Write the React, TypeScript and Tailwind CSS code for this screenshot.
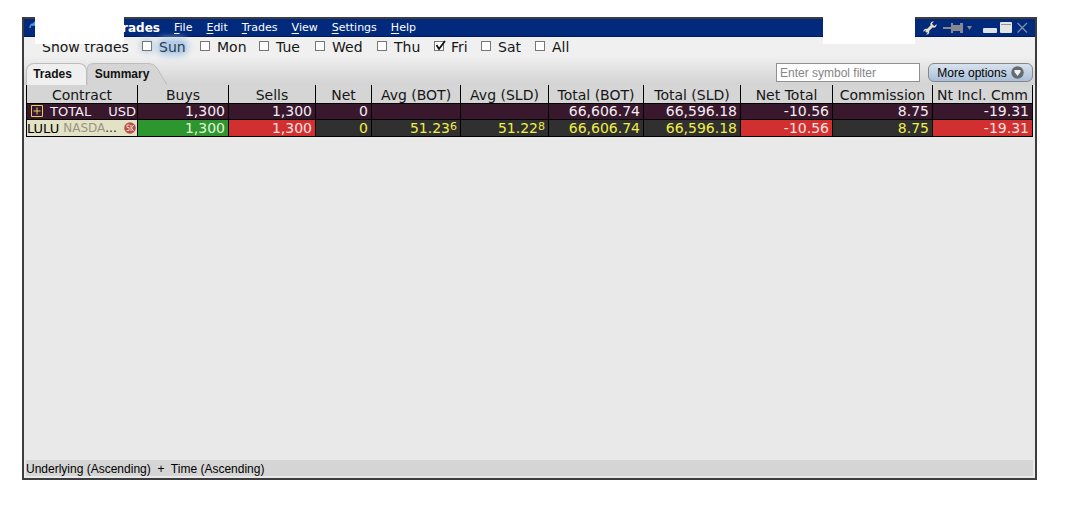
import React from "react";
import clsx from "clsx";

const menus = ["File", "Edit", "Trades", "View", "Settings", "Help"];

const days = [
    { name: "Sun", width: "w-[58px]" },
    { name: "Mon", width: "w-[59px]" },
    { name: "Tue", width: "w-14" },
    { name: "Wed", width: "w-[62px]" },
    { name: "Thu", width: "w-[57px]" },
    { name: "Fri", width: "w-[47px]" },
    { name: "Sat", width: "w-[54px]" },
    { name: "All", width: "w-10" },
];

const columns = [
    { title: "Contract", width: "w-[111px]" },
    { title: "Buys", width: "w-[91px]" },
    { title: "Sells", width: "w-[87px]" },
    { title: "Net", width: "w-[56px]" },
    { title: "Avg (BOT)", width: "w-[89px]" },
    { title: "Avg (SLD)", width: "w-[88px]" },
    { title: "Total (BOT)", width: "w-[95px]" },
    { title: "Total (SLD)", width: "w-[97px]" },
    { title: "Net Total", width: "w-[92px]" },
    { title: "Commission", width: "w-[100px]" },
    { title: "Nt Incl. Cmm", width: "w-[100px]" },
];

const totals = ["1,300", "1,300", "0", "", "", "66,606.74", "66,596.18", "-10.56", "8.75", "-19.31"];

const GREEN = "bg-[#2e962e] text-[#e4f5dc]";
const RED = "bg-[#d23030] text-[#fbe3e0]";
const DARK = "bg-[#303030] text-[#f0ee45]";

const position = [
    { value: "1,300", tone: GREEN },
    { value: "1,300", tone: RED },
    { value: "0", tone: DARK },
    { value: "51.23", small: "6", tone: DARK },
    { value: "51.22", small: "8", tone: DARK },
    { value: "66,606.74", tone: DARK },
    { value: "66,596.18", tone: DARK },
    { value: "-10.56", tone: RED },
    { value: "8.75", tone: DARK },
    { value: "-19.31", tone: RED },
];

function TitleBar() {
    return (
        <header className="flex h-[18px] items-center border-b border-[#001a55] bg-[#022a7c] pr-[7px] text-white">
            <svg width="12" height="16" viewBox="0 0 12 16" fill="none" className="ml-1 shrink-0">
                <path d="M2 8C2 4 5 3 8 5M8 5L6 2M8 5H4" stroke="#5b9be0" strokeWidth="1.5" />
            </svg>
            <h1 className="w-[120px] text-right text-[12px] font-bold">Trades</h1>
            <nav className="ml-[14px] flex gap-[14px] pt-px text-[11px]">
                {menus.map((menu) => (
                    <button key={menu} type="button">
                        <span className="underline underline-offset-2">{menu[0]}</span>
                        {menu.slice(1)}
                    </button>
                ))}
            </nav>

            {/* window controls */}
            <div className="ml-auto flex items-center">
                <button type="button" aria-label="Configure">
                    <svg width="14" height="14" viewBox="0 0 14 14">
                        <path d="M3 11L10 4" stroke="#e6e0c4" strokeWidth="2.8" />
                        <path d="M13.5 3L11.5 5L9.5 4.5L9 2.5L11 .5C8.500 0 6.800 2 7.500 4.200L9.800 6.500C12 7.200 14 5.500 13.500 3Z" fill="#e6e0c4" />
                        <path d="M.5 11L2.500 9L4.500 9.500L5 11.500L3 13.500C5.500 14 6.800 12 6.200 10L4 7.800C2 7.200 0 8.500 .5 11Z" fill="#e6e0c4" />
                    </svg>
                </button>
                <button type="button" aria-label="Pin" className="ml-[5px]">
                    <svg width="32" height="12" viewBox="0 0 32 12" fill="#87898f">
                        <path d="M1 5H9V7H1Z" />
                        <path d="M9 1H11V3H18V1H21V11H18V9H11V11H9Z" />
                        <path d="M25 4H30L27.500 8Z" />
                    </svg>
                </button>
                <button type="button" aria-label="Minimize" className="ml-[9px]">
                    <svg width="14" height="12" viewBox="0 0 14 12">
                        <rect y="6" width="14" height="5" rx="1" fill="#dfe2e8" />
                    </svg>
                </button>
                <button type="button" aria-label="Maximize" className="ml-[3px]">
                    <svg width="12" height="12" viewBox="0 0 12 12">
                        <rect width="12" height="11" rx="1" fill="#e4e4e2" />
                        <rect x="1" y="2" width="10" height="1" fill="#8992a8" />
                    </svg>
                </button>
                <button type="button" aria-label="Close" className="ml-1">
                    <svg width="12" height="12" viewBox="0 0 12 12" stroke="#8390a8" strokeWidth="1.2">
                        <path d="M1.500 1L11 10.500M11 1L1.500 10.500" />
                    </svg>
                </button>
            </div>
        </header>
    );
}

function DayFilter() {
    return (
        <fieldset className="flex h-5 items-center pl-4 text-[14px] text-[#161616]">
            <span className="w-[100px] shrink-0">Show trades</span>
            {days.map(({ name, width }) => (
                <label key={name} className={clsx("flex shrink-0 items-center gap-[7px]", width)}>
                    <input
                        type="checkbox"
                        defaultChecked={name === "Fri"}
                        className={clsx(
                            "peer mb-[2px] size-[10px] shrink-0 appearance-none border border-[#777] bg-white",
                            name === "Sun" && "shadow-[0_0_6px_1px_#b4cce6]"
                        )}
                    />
                    <svg
                        width="12"
                        height="12"
                        viewBox="0 0 12 12"
                        fill="none"
                        className="pointer-events-none invisible mb-[2px] -ml-[17px] shrink-0 peer-checked:visible"
                    >
                        <path d="M2.500 5L5 9L11 1" stroke="#111" strokeWidth="1.800" />
                    </svg>
                    <span
                        className={clsx(
                            "-ml-[2px] leading-3",
                            name === "Sun" && "rounded-md bg-[#b4cce6] text-[#2a3d55] shadow-[0_0_6px_3px_#b4cce6]"
                        )}
                    >
                        {name}
                    </span>
                </label>
            ))}
        </fieldset>
    );
}

function Toolbar() {
    return (
        <div className="flex h-[22px] items-stretch justify-between font-['Liberation_Sans',Arial,sans-serif] text-[12px]">
            <div role="tablist" className="flex font-bold text-[#111]">
                <button
                    type="button"
                    role="tab"
                    aria-selected="false"
                    className="w-[61px] rounded-t-lg border border-b-0 border-[#bdbdbd] bg-[#efefef] pr-2 pb-[2px]"
                >
                    Trades
                </button>
                <button type="button" role="tab" aria-selected="true" className="relative w-20">
                    <svg width="80" height="22" viewBox="0 0 80 22" className="absolute inset-0">
                        <path d="M0 22V7Q0 .5 7 .5H62Q67 .5 70 5L80 22Z" fill="#d5d5d5" />
                        <path d="M0 22V7Q0 .5 7 .5H62Q67 .5 70 5L80 22" fill="none" stroke="#bdbdbd" />
                    </svg>
                    <span className="relative mr-[10px]">Summary</span>
                </button>
            </div>
            <div className="flex h-[19px] gap-2">
                <input
                    type="text"
                    aria-label="Symbol filter"
                    placeholder="Enter symbol filter"
                    className="w-36 border border-[#919191] bg-white px-[3px] placeholder:text-[#858585]"
                />
                <button
                    type="button"
                    className="flex w-[105px] items-center justify-center gap-1 rounded-md border border-[#83878c] bg-linear-to-b from-[#d9e3ee] to-[#a9bfd8] text-black"
                >
                    More options
                    <svg width="13" height="13" viewBox="0 0 13 13">
                        <circle cx="6.500" cy="6.500" r="6.200" fill="#666b70" />
                        <path d="M3.500 4H9.500V6L6.500 10L3.500 6Z" fill="#eef2f5" />
                    </svg>
                </button>
            </div>
        </div>
    );
}

function SummaryTable() {
    return (
        <table className="w-full table-fixed border-collapse text-[14px] leading-[15px] whitespace-nowrap">
            <thead>
                <tr className="h-[18px] bg-[#d5d5d5] text-[#161616]">
                    {columns.map(({ title, width }) => (
                        <th
                            key={title}
                            scope="col"
                            className={clsx("border-x border-b border-black p-0 pt-1 leading-[13px] font-normal", width)}
                        >
                            {title}
                        </th>
                    ))}
                </tr>
            </thead>
            <tbody className="text-right">
                <tr className="h-4 bg-[#39182e] text-[#f3edf1]">
                    <td className="border border-black p-0 text-[13px]">
                        <div className="flex items-center pl-1">
                            <button type="button" aria-label="Expand total" className="flex">
                                <svg width="12" height="12" viewBox="0 0 12 12" fill="none" stroke="#e8ce62">
                                    <path d="M.5 .5H11.500V11.500H.5ZM6 2.500V9.500M2.500 6H9.500" />
                                </svg>
                            </button>
                            <span className="ml-[7px]">TOTAL</span>
                            <span className="mr-px ml-auto">USD</span>
                        </div>
                    </td>
                    {totals.map((value, i) => (
                        <td key={i} className="border border-black p-0 pr-[3px]">{value}</td>
                    ))}
                </tr>
                <tr className="h-[17px]">
                    <td className="border border-black bg-[#e4e2c5] p-0 pt-px">
                        <div className="flex items-center">
                            <span className="text-[13px] text-black">LULU</span>
                            <span className="ml-1 text-[12px] text-[#969584]">NASDA</span>
                            <span className="text-[12px] text-[#222]">...</span>
                            <svg width="12" height="12" viewBox="0 0 12 12" className="mr-px ml-auto shrink-0">
                                <circle cx="6" cy="6" r="5.800" fill="#b9504a" />
                                <path d="M5.500 3H3V5.500H5V8.500H2.500M7 3V9M9.500 3L7.500 6L9.500 9" fill="none" stroke="#f2d4cb" />
                            </svg>
                        </div>
                    </td>
                    {position.map(({ value, small, tone }, i) => (
                        <td key={i} className={clsx("border border-black p-0 pt-px pr-[3px]", tone)}>
                            {value}
                            {small && <span className="align-[3px] text-[11px] leading-none">{small}</span>}
                        </td>
                    ))}
                </tr>
            </tbody>
        </table>
    );
}

export default function App() {
    return (
        <div className="relative flex h-screen min-h-60 bg-white pt-[17px] pr-7 pb-[37px] pl-[22px] font-['DejaVu_Sans',Verdana,sans-serif]">
            <main className="flex min-w-0 flex-1 flex-col overflow-hidden border-2 border-[#3d3d40] bg-[#e9e9e9]">
                <TitleBar />
                <div className="bg-linear-to-b from-[#f0f0f0] from-40% to-[#d2d2d2] px-[2px]">
                    <DayFilter />
                    <div className="pt-[6px]">
                        <Toolbar />
                    </div>
                </div>
                <div className="flex-1 px-[2px]">
                    <SummaryTable />
                </div>
                <footer className="mx-[2px] mb-[2px] h-4 bg-[#d5d5d5] pt-px font-['Liberation_Sans',Arial,sans-serif] text-[12px] leading-4 whitespace-pre text-black">
                    Underlying (Ascending)  +  Time (Ascending)
                </footer>
            </main>

            {/* blanked out account details */}
            <div className="absolute top-0 left-[35px] h-11 w-[89px] bg-white" />
            <div className="absolute top-0 right-[150px] h-11 w-[92px] bg-white" />
        </div>
    );
}
